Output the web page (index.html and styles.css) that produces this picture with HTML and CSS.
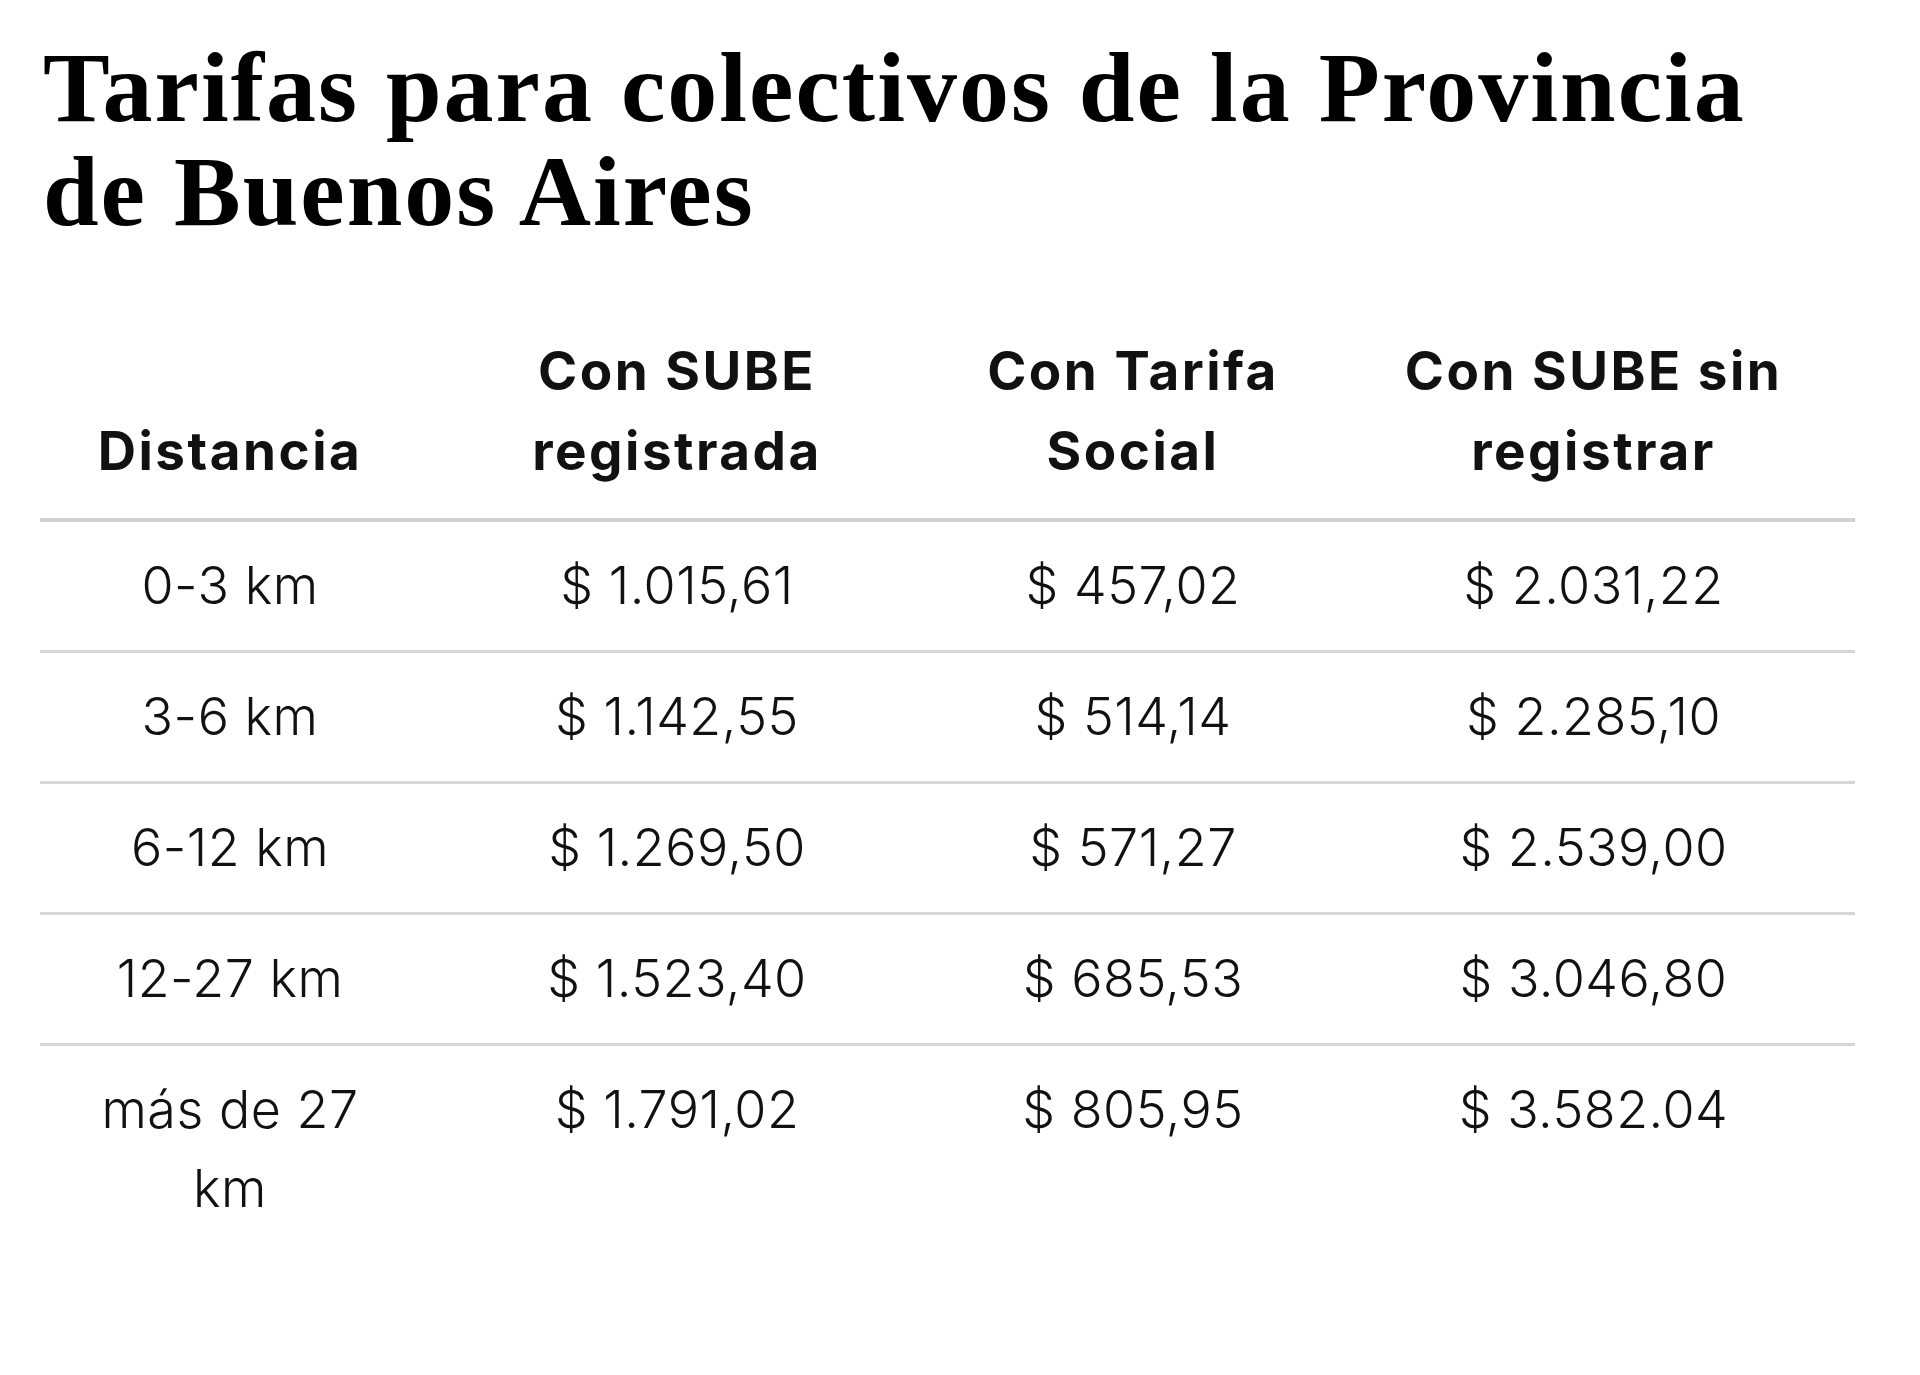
FILE: index.html
```html
<!DOCTYPE html>
<html lang="es">
<head>
<meta charset="utf-8">
<title>Tarifas para colectivos de la Provincia de Buenos Aires</title>
<link rel="stylesheet" href="styles.css">
</head>
<body>
<main class="page">
  <h1 class="title">Tarifas para colectivos de la Provincia de Buenos Aires</h1>
  <table class="fares">
    <colgroup>
      <col class="c1"><col class="c2"><col class="c3"><col class="c4">
    </colgroup>
    <thead>
      <tr>
        <th>Distancia</th>
        <th>Con SUBE registrada</th>
        <th>Con Tarifa Social</th>
        <th>Con SUBE sin registrar</th>
      </tr>
    </thead>
    <tbody>
      <tr><td>0-3 km</td><td>$ 1.015,61</td><td>$ 457,02</td><td>$ 2.031,22</td></tr>
      <tr><td>3-6 km</td><td>$ 1.142,55</td><td>$ 514,14</td><td>$ 2.285,10</td></tr>
      <tr><td>6-12 km</td><td>$ 1.269,50</td><td>$ 571,27</td><td>$ 2.539,00</td></tr>
      <tr><td>12-27 km</td><td>$ 1.523,40</td><td>$ 685,53</td><td>$ 3.046,80</td></tr>
      <tr><td>más de 27 km</td><td>$ 1.791,02</td><td>$ 805,95</td><td>$ 3.582.04</td></tr>
    </tbody>
  </table>
</main>
</body>
</html>
```
FILE: styles.css
```css
html, body {
  margin: 0;
  padding: 0;
  background: #ffffff;
}
.page {
  padding: 36px 65px 0 40px;
}
.title {
  margin: 0 0 0 3px;
  font-family: "Liberation Serif", "DejaVu Serif", serif;
  font-weight: 700;
  font-size: 100px;
  line-height: 104px;
  letter-spacing: 2px;
  color: #000;
  max-width: 1750px;
}
.fares {
  margin-top: 87px;
  width: 1815px;
  border-collapse: collapse;
  table-layout: fixed;
  font-family: "Inter", "Noto Sans", sans-serif;
  color: #111;
}
.c1 { width: 380px; }
.c2 { width: 514px; }
.c3 { width: 398px; }
.c4 { width: 523px; }
.fares th {
  font-weight: 700;
  font-size: 53px;
  line-height: 80px;
  letter-spacing: 2.5px;
  text-align: center;
  vertical-align: bottom;
  padding: 0 20px 27px;
  border-bottom: 4px solid #d2d2d2;
}
.fares td {
  font-weight: 300;
  font-size: 52px;
  line-height: 79px;
  letter-spacing: 0.5px;
  text-align: center;
  vertical-align: top;
  padding: 24px 20px 25px;
  border-bottom: 3px solid #d6d6d6;
}
.fares tbody tr:last-child td {
  border-bottom: none;
}
```
